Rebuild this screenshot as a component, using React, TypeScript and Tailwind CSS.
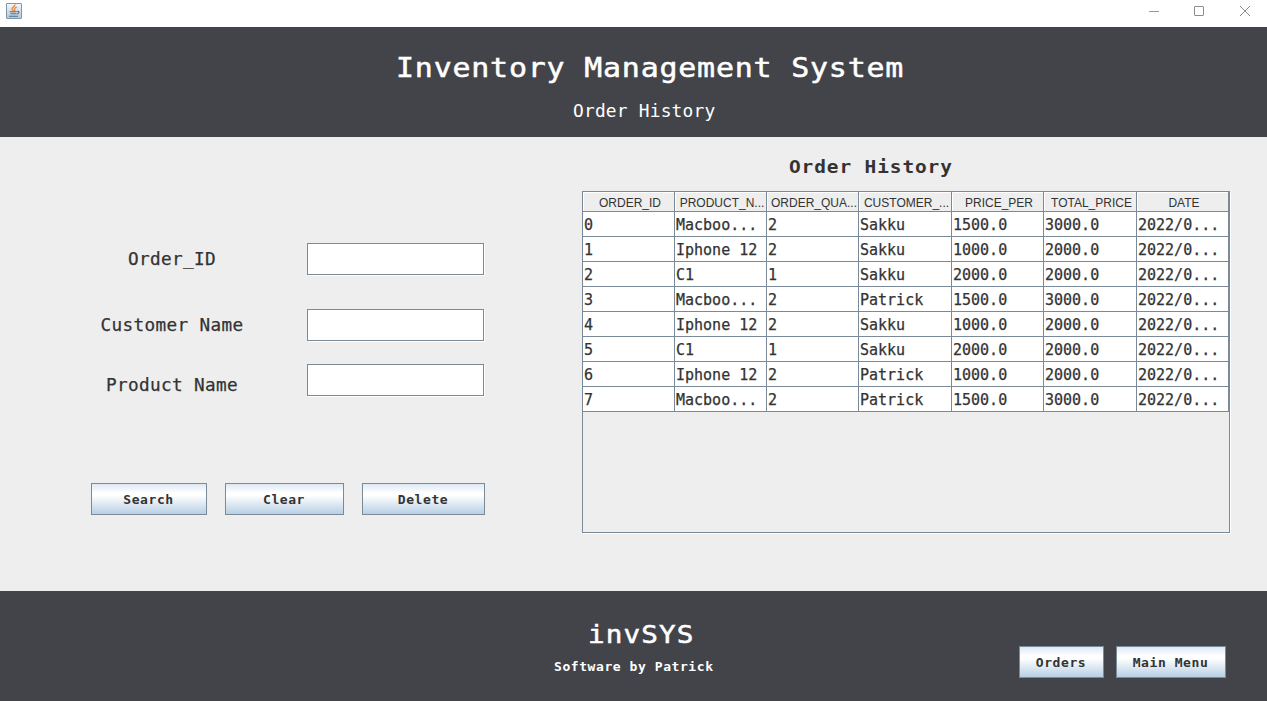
import React from "react";

const columns = ["ORDER_ID", "PRODUCT_N...", "ORDER_QUA...", "CUSTOMER_...", "PRICE_PER", "TOTAL_PRICE", "DATE"];

const rows = [
  ["0", "Macboo...", "2", "Sakku", "1500.0", "3000.0", "2022/0..."],
  ["1", "Iphone 12", "2", "Sakku", "1000.0", "2000.0", "2022/0..."],
  ["2", "C1", "1", "Sakku", "2000.0", "2000.0", "2022/0..."],
  ["3", "Macboo...", "2", "Patrick", "1500.0", "3000.0", "2022/0..."],
  ["4", "Iphone 12", "2", "Sakku", "1000.0", "2000.0", "2022/0..."],
  ["5", "C1", "1", "Sakku", "2000.0", "2000.0", "2022/0..."],
  ["6", "Iphone 12", "2", "Patrick", "1000.0", "2000.0", "2022/0..."],
  ["7", "Macboo...", "2", "Patrick", "1500.0", "3000.0", "2022/0..."],
];

const gridCols = "grid grid-cols-[92px_92px_92px_93px_92px_93px_92px]";

function Button({ label, className }: { label: string; className: string }) {
  return (
    <button
      className={`h-8 border border-[#7a8a99] bg-[linear-gradient(to_bottom,#dde8f3_0%,#ffffff_30%,#ffffff_38%,#b8cfe5_100%)] pt-px pr-px text-center text-[13px] leading-[30px] font-bold tracking-[0.57px] whitespace-pre text-[#333333] ${className}`}
    >
      {label}
    </button>
  );
}

function Field({ label, labelClass, inputClass }: { label: string; labelClass: string; inputClass: string }) {
  return (
    <div className="flex h-full items-start">
      <label className={`w-[172px] scale-x-[1.04] text-center text-[17px] leading-6 tracking-[0.34px] whitespace-pre text-[#333333] [-webkit-text-stroke:0.25px_#333333] ${labelClass}`}>
        {label}
      </label>
      <input
        className={`h-8 w-[177px] border border-[#7a8a99] bg-white px-1 text-[15px] shadow-[1px_1px_0_#ffffff] outline-none ${inputClass}`}
      />
    </div>
  );
}

function JavaIcon() {
  return (
    <svg className="mt-[3px] ml-[6px]" width="16" height="16" viewBox="0 0 16 16" fill="none">
      <defs>
        <linearGradient id="java-bg" x1="0" y1="0" x2="0" y2="1">
          <stop offset="0" stopColor="#f6f8fa" />
          <stop offset="1" stopColor="#b5c7d6" />
        </linearGradient>
      </defs>
      <rect x="0.5" y="0.5" width="15" height="15" rx="0.5" fill="url(#java-bg)" stroke="#7d97ab" />
      <path d="M9 1.5C9.3 3.6 5.3 4.4 6 6.2 6.3 7 7.3 7.3 7.4 8.3M10.8 4C8.6 5 8 5.8 8.7 6.8 9 7.3 8.8 7.8 8.4 8.3" stroke="#e58a3c" strokeWidth="1.3" />
      <path d="M3.5 8.8H10.8M4.5 10.8H10.3M3 13.2H12M11 8.3C13.8 7.8 13.6 10.4 10.8 11" stroke="#4f6f8c" strokeWidth="1.1" />
    </svg>
  );
}

export default function App() {
  return (
    <div className="flex h-[701px] w-[1267px] flex-col overflow-hidden bg-[#eeeeee] font-['DejaVu_Sans_Mono',monospace]">
      <div className="flex h-[27px] shrink-0 items-start justify-between bg-white">
        <JavaIcon />
        <div className="mt-[5px] mr-4 flex">
          <svg width="12" height="12" viewBox="0 0 12 12" stroke="#999999">
            <path d="M1 6.5H11" />
          </svg>
          <svg className="ml-[33px]" width="12" height="12" viewBox="0 0 12 12" fill="none" stroke="#8c8c8c">
            <rect x="1.5" y="1.5" width="9" height="9" rx="0.5" />
          </svg>
          <svg className="ml-[34px]" width="12" height="12" viewBox="0 0 12 12" stroke="#8c8c8c">
            <path d="M1 1L11 11M11 1L1 11" />
          </svg>
        </div>
      </div>

      <header className="h-[110px] shrink-0 bg-[#434449] text-white">
        <h1 className="ml-[396px] w-max origin-left scale-x-[1.15] pt-[21px] text-[26px] leading-10 tracking-[0.71px] whitespace-pre [-webkit-text-stroke:0.5px_#ffffff]">
          Inventory Management System
        </h1>
        <p className="mt-[11px] ml-[573px] w-max origin-left scale-x-[1.05] text-[17px] leading-6 tracking-[0.2px] whitespace-pre">
          Order History
        </p>
      </header>

      <main className="flex h-[454px] shrink-0">
        <section className="w-[582px] pt-[106px] pl-[86px]">
          <div className="grid grid-rows-[66px_55px_60px]">
            <Field label="Order_ID" labelClass="mt-1" inputClass="ml-[49px]" />
            <Field label="Customer Name" labelClass="mt-1" inputClass="ml-[49px]" />
            <Field label="Product Name" labelClass="mt-[9px]" inputClass="ml-[49px]" />
          </div>
          <div className="mt-[59px] ml-[5px] flex">
            <Button label="Search" className="w-[116px]" />
            <Button label="Clear" className="ml-[18px] w-[119px]" />
            <Button label="Delete" className="ml-[18px] w-[123px]" />
          </div>
        </section>

        <section className="w-[648px]">
          <h2 className="mt-[18px] ml-[207px] w-max origin-left scale-x-[1.08] text-[18px] leading-6 font-bold tracking-[0.83px] whitespace-pre text-[#333333]">
            Order History
          </h2>
          <div className="mt-3 h-[342px] border border-[#7a8a99] shadow-[1px_1px_0_#ffffff]">
            <div className="w-[646px]">
              <div className={`${gridCols} h-5`}>
                {columns.map((name) => (
                  <div
                    key={name}
                    className="overflow-hidden border-r border-b border-[#7a8a99] pl-[3px] text-center font-['Liberation_Sans',sans-serif] text-[12px] leading-[22px] whitespace-nowrap text-[#333333] shadow-[inset_1px_1px_0_#ffffff]"
                  >
                    {name}
                  </div>
                ))}
              </div>
              {rows.map((row) => (
                <div key={row[0]} className={`${gridCols} h-[25px] bg-white`}>
                  {row.map((cell, i) => (
                    <div
                      key={i}
                      className="overflow-hidden border-r border-b border-[#7a8a99] pl-px text-[15px] leading-[26px] whitespace-pre text-[#333333] [-webkit-text-stroke:0.25px_#333333]"
                    >
                      {cell}
                    </div>
                  ))}
                </div>
              ))}
            </div>
          </div>
        </section>
      </main>

      <footer className="flex h-[110px] shrink-0 bg-[#434449] text-white">
        <div className="w-[1019px]">
          <div className="mt-7 ml-[588px] w-max origin-left scale-x-[1.15] text-[24px] leading-8 tracking-[1px] whitespace-pre [-webkit-text-stroke:0.5px_#ffffff]">
            invSYS
          </div>
          <div className="mt-[6px] ml-[554px] text-[13px] leading-5 font-bold tracking-[0.57px] whitespace-pre">Software by Patrick</div>
        </div>
        <div className="mt-[55px] flex gap-3">
          <Button label="Orders" className="w-[85px]" />
          <Button label="Main Menu" className="w-[110px]" />
        </div>
      </footer>
    </div>
  );
}
